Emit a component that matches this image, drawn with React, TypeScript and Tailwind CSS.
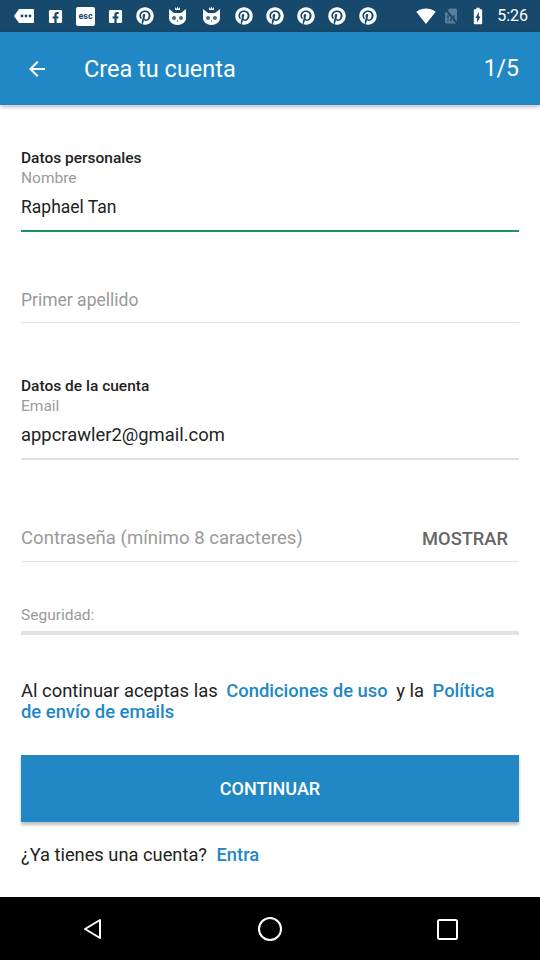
import React from "react";
import { FaFacebookSquare, FaPinterest } from "react-icons/fa";
import { MdArrowBack, MdSignalWifi4Bar, MdBatteryChargingFull, MdSimCard } from "react-icons/md";

const font = { fontFamily: "Roboto, 'Noto Sans', sans-serif" };

function ChatIcon() {
  return (
    <svg width="22" height="16" viewBox="0 0 22 16">
      <path d="M6 1h14a1 1 0 0 1 1 1v12a1 1 0 0 1-1 1H6L1 8z" fill="white" />
      <circle cx="9" cy="8" r="1.4" fill="#17496d" />
      <circle cx="13" cy="8" r="1.4" fill="#17496d" />
      <circle cx="17" cy="8" r="1.4" fill="#17496d" />
    </svg>
  );
}

function EscIcon() {
  return (
    <div className="w-[19px] h-[19px] bg-white rounded-[2px] flex items-center justify-center text-[9px] font-bold text-[#17496d] leading-none">
      esc
    </div>
  );
}

function CatIcon() {
  return (
    <svg width="21" height="20" viewBox="0 0 21 20">
      <path d="M2 3l5 4h7l5-4v9c0 4-4 7-8.5 7S2 16 2 12z" fill="white" />
      <path d="M8 1l1.5 2L10.5 0.5 11.5 3 13 1v3H8z" fill="white" />
      <circle cx="7" cy="12" r="2" fill="#4a6b8a" />
      <circle cx="14" cy="12" r="2" fill="#4a6b8a" />
      <circle cx="10.5" cy="15" r="0.8" fill="#4a6b8a" />
    </svg>
  );
}

function StatusBar() {
  return (
    <div className="h-[32px] bg-[#17496d] flex items-center pl-[13px] pr-[12px] text-white">
      <div className="flex items-center gap-[13px]">
        <ChatIcon />
        <FaFacebookSquare size={15} />
        <EscIcon />
        <FaFacebookSquare size={15} />
        <FaPinterest size={18} />
        <CatIcon />
        <CatIcon />
        <FaPinterest size={18} />
        <FaPinterest size={18} />
        <FaPinterest size={18} />
        <FaPinterest size={18} />
        <FaPinterest size={18} />
      </div>
      <div className="ml-auto flex items-center gap-[6px]">
        <MdSignalWifi4Bar size={20} />
        <div className="relative">
          <MdSimCard size={18} className="text-[#5a7d98]" />
          <div className="absolute left-[8px] top-[-1px] w-[2px] h-[20px] bg-[#17496d] rotate-[-40deg]" />
        </div>
        <MdBatteryChargingFull size={20} className="ml-[2px]" />
        <span className="text-[16px] ml-[3px]" style={font}>5:26</span>
      </div>
    </div>
  );
}

function Field({ children }: { children: React.ReactNode }) {
  return <div className="flex items-center h-[20px]">{children}</div>;
}

export default function App() {
  return (
    <div className="w-[540px] h-[960px] bg-white flex flex-col overflow-hidden" style={font}>
      <StatusBar />
      <header className="h-[73px] bg-[#2188c5] flex items-center text-white shadow-[0_2px_4px_rgba(0,0,0,0.25)] relative z-10">
        <div className="w-[72px] flex justify-center pl-[1px]">
          <MdArrowBack size={24} />
        </div>
        <h1 className="text-[23.5px] ml-[12px] mt-[2px]">Crea tu cuenta</h1>
        <span className="ml-auto mr-[21px] text-[23px] mt-[2px]">1/5</span>
      </header>

      <main className="flex-1 px-[21px] flex flex-col">
        <p className="mt-[43px] text-[15.5px] leading-[20px] font-medium text-[#222]">Datos personales</p>
        <p className="text-[15.5px] leading-[20px] text-[#9a9a9a]">Nombre</p>
        <div className="mt-[9px] pb-[13px] border-b-2 border-[#1a9560]">
          <Field>
            <span className="text-[17.5px] text-[#222]">Raphael Tan</span>
          </Field>
        </div>

        <div className="mt-[58px] pb-[12px] border-b border-[#dfe3e3]">
          <Field>
            <span className="text-[17.5px] text-[#9a9a9a]">Primer apellido</span>
          </Field>
        </div>

        <p className="mt-[53px] text-[15.5px] leading-[20px] font-medium text-[#222]">Datos de la cuenta</p>
        <p className="text-[15.5px] leading-[20px] text-[#9a9a9a]">Email</p>
        <div className="mt-[9px] pb-[13px] border-b-2 border-[#dce2e2]">
          <Field>
            <span className="text-[18.4px] text-[#222]">appcrawler2@gmail.com</span>
          </Field>
        </div>

        <div className="mt-[69px] pb-[12px] border-b border-[#dfe3e3]">
          <Field>
            <span className="text-[18.6px] text-[#9a9a9a]">Contraseña (mínimo 8 caracteres)</span>
            <span className="ml-auto mr-[11px] text-[18.3px] font-medium text-[#666]">MOSTRAR</span>
          </Field>
        </div>

        <p className="mt-[43px] text-[15.5px] leading-[20px] text-[#9a9a9a]">Seguridad:</p>
        <div className="mt-[6px] h-[4px] bg-[#dfe3e3]" />

        <p className="mt-[45px] text-[18.4px] leading-[21px] text-[#222]">
          Al continuar aceptas las{" "}
          <span className="font-medium text-[#2188c5] mx-[4px]">Condiciones de uso</span> y la{" "}
          <span className="font-medium text-[#2188c5] ml-[4px]">Política</span>
          <br />
          <span className="font-medium text-[#2188c5]">de envío de emails</span>
        </p>

        <button className="mt-[33px] h-[67px] bg-[#2188c5] text-white text-[18px] font-medium shadow-[0_3px_3px_rgba(0,0,0,0.25)]">
          CONTINUAR
        </button>

        <p className="mt-[23px] text-[18.3px] leading-[20px] text-[#222]">
          ¿Ya tienes una cuenta?{" "}
          <span className="font-medium text-[#2188c5] ml-[5px]">Entra</span>
        </p>
      </main>

      <nav className="h-[63px] bg-black flex items-center">
        <div className="flex-1 flex justify-center pl-[4px]">
          <svg width="24" height="24" viewBox="0 0 24 24" fill="none" stroke="white" strokeWidth="2" strokeLinejoin="round">
            <path d="M19 3v18L4 12z" />
          </svg>
        </div>
        <div className="flex-1 flex justify-center">
          <svg width="26" height="26" viewBox="0 0 26 26" fill="none" stroke="white" strokeWidth="2">
            <circle cx="13" cy="13" r="11" />
          </svg>
        </div>
        <div className="flex-1 flex justify-center pr-[4px]">
          <svg width="24" height="24" viewBox="0 0 24 24" fill="none" stroke="white" strokeWidth="2">
            <rect x="3" y="3" width="19" height="19" rx="1.5" />
          </svg>
        </div>
      </nav>
    </div>
  );
}
